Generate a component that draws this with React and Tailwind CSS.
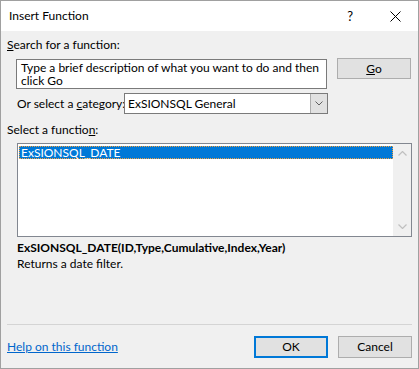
import React from "react";

export default function App() {
  return (
    <div
      className="w-[419px] h-[369px] bg-[#f0f0f0] border border-[#a0a0a0] flex flex-col text-[12px] leading-[16px] text-black overflow-hidden"
      style={{ fontFamily: 'Lato, "Noto Sans", sans-serif' }}
    >
      {/* Title bar */}
      <div className="h-[30px] bg-white flex items-center shrink-0">
        <span className="ml-[8px] text-[12px]">Insert Function</span>
        <span className="ml-auto mr-[37px] text-[13px]">?</span>
        <svg width="11" height="11" viewBox="0 0 11 11" className="mr-[17px]">
          <path d="M0.5 0.5 L10.5 10.5 M10.5 0.5 L0.5 10.5" stroke="#000" strokeWidth="1" />
        </svg>
      </div>

      <div className="pl-[6px] flex flex-col">
        <div className="mt-[6px] h-[16px]">
          <span className="underline">S</span>earch for a function:
        </div>
        <div className="mt-[5px] flex items-start">
          <div className="ml-[9px] mt-[1px] w-[311px] h-[30px] bg-white border border-[#7a7a7a] px-[4px] pt-[1px] leading-[13px]">
            Type a brief description of what you want to do and then click Go
          </div>
          <button className="ml-[10px] w-[74px] h-[21px] bg-[#e1e1e1] border border-[#adadad] leading-[18px]">
            <span className="underline">G</span>o
          </button>
        </div>
        <div className="mt-[4px] flex items-center h-[21px]">
          <span className="ml-[10px] w-[107px] whitespace-nowrap">
            Or select a <span className="underline">c</span>ategory:
          </span>
          <div className="w-[204px] h-[21px] bg-white border border-[#7a7a7a] flex items-center">
            <span className="ml-[3px] flex-1">ExSIONSQL General</span>
            <div className="w-[17px] h-[19px] bg-[#e1e1e1] border-l border-[#adadad] flex items-center justify-center">
              <svg width="8" height="5" viewBox="0 0 8 5">
                <path d="M0.5 0.5 L4 4 L7.5 0.5" stroke="#606060" fill="none" strokeWidth="1" />
              </svg>
            </div>
          </div>
        </div>
        <div className="mt-[8px] h-[16px]">
          Select a functio<span className="underline">n</span>:
        </div>
        <div className="mt-[5px] ml-[10px] w-[395px] h-[94px] border border-[#828790] bg-white flex">
          <div className="flex-1 pt-[2px] pl-[1px]">
            <div className="h-[13px] bg-[#0078d7] text-white leading-[13px] pl-[2px] outline outline-1 outline-dotted outline-[#f0a040] -outline-offset-1">
              ExSIONSQL_DATE
            </div>
          </div>
          <div className="w-[18px] bg-[#f0f0f0] flex flex-col items-center justify-between py-[7px]">
            <svg width="9" height="5" viewBox="0 0 9 5">
              <path d="M0.5 4.5 L4.5 0.5 L8.5 4.5" stroke="#c0c0c0" fill="none" strokeWidth="1.2" />
            </svg>
            <svg width="9" height="5" viewBox="0 0 9 5">
              <path d="M0.5 0.5 L4.5 4.5 L8.5 0.5" stroke="#c0c0c0" fill="none" strokeWidth="1.2" />
            </svg>
          </div>
        </div>
        <div className="mt-[3px] ml-[10px] h-[16px] font-bold">
          ExSIONSQL_DATE(ID,Type,Cumulative,Index,Year)
        </div>
        <div className="ml-[10px] h-[16px]">Returns a date filter.</div>
        <div className="mt-[52px] w-[405px] h-px bg-[#d4d4d4]" />
        <div className="mt-[11px] flex items-center h-[22px]">
          <a className="text-[#0066cc] underline">Help on this function</a>
          <button className="ml-auto w-[74px] h-[22px] bg-[#e1e1e1] border-2 border-[#0078d7]">OK</button>
          <button className="ml-[10px] mr-[6px] w-[74px] h-[22px] bg-[#e1e1e1] border border-[#adadad]">Cancel</button>
        </div>
      </div>
    </div>
  );
}
